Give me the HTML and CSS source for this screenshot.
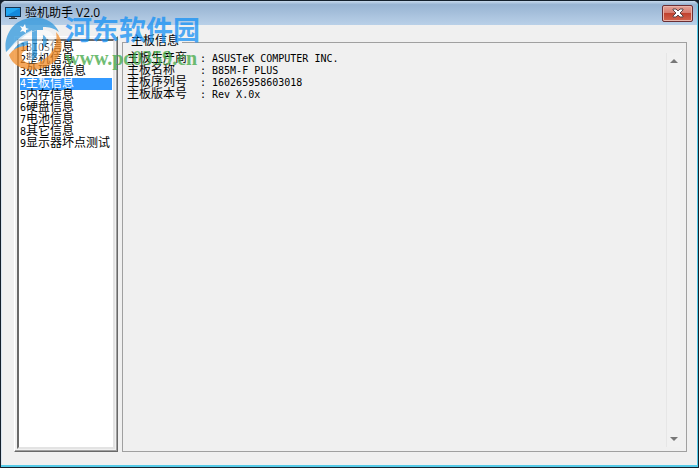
FILE: index.html
```html
<!DOCTYPE html>
<html lang="zh-CN">
<head>
  <meta charset="UTF-8">
  <title>验机助手 V2.0</title>
  <link rel="stylesheet" href="styles.css">
</head>
<body>

  <div class="window">
    <header class="titlebar">
      <svg class="app-icon" viewBox="0 0 16 14" width="16" height="14" aria-hidden="true">
        <rect x="0" y="1" width="16" height="10" fill="#16324f"/>
        <rect x="1" y="2" width="14" height="8" fill="#22a7f2"/>
        <path d="M1 10L15 2V10Z" fill="#1389dc"/>
        <rect x="6" y="11" width="4" height="1" fill="#555"/>
        <rect x="4" y="12" width="8" height="1" fill="#222"/>
      </svg>
      <h1 class="title">验机助手 V2.0</h1>
      <button class="close" type="button" aria-label="关闭">
        <svg viewBox="0 0 12 10" width="12" height="10" aria-hidden="true">
          <path d="M1 1H4L6 3L8 1H11V2L8 5L11 8V9H8L6 7L4 9H1V8L4 5L1 2Z" fill="#fff" stroke="#5c4648" stroke-width="1"/>
        </svg>
      </button>
    </header>

    <main class="content">
      <nav class="menu-frame">
        <ul class="menu">
          <li><a href="#bios"><span class="latin">1BIOS</span>信息</a></li>
          <li><a href="#machine"><span class="latin">2</span>整机信息</a></li>
          <li><a href="#cpu"><span class="latin">3</span>处理器信息</a></li>
          <li><a class="selected" href="#board"><span class="latin">4</span>主板信息</a></li>
          <li><a href="#memory"><span class="latin">5</span>内存信息</a></li>
          <li><a href="#disk"><span class="latin">6</span>硬盘信息</a></li>
          <li><a href="#battery"><span class="latin">7</span>电池信息</a></li>
          <li><a href="#other"><span class="latin">8</span>其它信息</a></li>
          <li><a href="#screen"><span class="latin">9</span>显示器坏点测试</a></li>
        </ul>
      </nav>

      <fieldset class="panel" id="board">
        <legend>主板信息</legend>
        <div class="panel-body">
          <dl class="info">
            <dt>主板生产商</dt><dd class="latin">: ASUSTeK COMPUTER INC.</dd>
            <dt>主板名称</dt><dd class="latin">: B85M-F PLUS</dd>
            <dt>主板序列号</dt><dd class="latin">: 160265958603018</dd>
            <dt>主板版本号</dt><dd class="latin">: Rev X.0x</dd>
          </dl>
          <div class="scrollbar">
            <button class="arrow" type="button" aria-label="向上滚动">
              <svg viewBox="0 0 8 4" width="8" height="4" aria-hidden="true"><path d="M4 0L8 4H0Z" fill="#777"/></svg>
            </button>
            <button class="arrow" type="button" aria-label="向下滚动">
              <svg viewBox="0 0 8 4" width="8" height="4" aria-hidden="true"><path d="M0 0H8L4 4Z" fill="#777"/></svg>
            </button>
          </div>
        </div>
      </fieldset>
    </main>

    <div class="watermark">
      <svg class="logo" viewBox="0 0 60 60" width="60" height="60" aria-hidden="true">
        <path d="M1 40C-2 24 8 8 25 6C39 4 49 10 54 20C49 16 44 15 38 15V18H32L26 20L22 22L10 32Z" fill="#2f97dc"/>
        <path d="M1 41C7 33 14 24 27 18V49L23 51V29C15 30 8 35 3 45Z" fill="#fff" fill-opacity="0.75"/>
        <path d="M23 29C18 29 13 32 9 37L8 45C12 38 17 34 23 33Z" fill="#2f97dc"/>
        <path d="M32 18H38C53 18 54 38 39 42V37C46 33 45 24 37 22V45H32Z" fill="#fff" fill-opacity="0.75"/>
        <path d="M27 20L32 18V44L27 49Z" fill="#2f97dc"/>
        <path d="M38 23C43 25 43 33 38 36Z" fill="#2f97dc"/>
        <path d="M4 43C8 37 14 34 22 34V38C17 39 15 43 18 48C23 53 31 53 38 48C49 41 53 31 51 20C60 29 58 45 45 53C29 62 9 58 4 43Z" fill="#f28c28"/>
        <path d="M15 14L18 15L20 12L21 16L24 17L21 18L21 21L18 19L15 20L17 17Z" fill="#fff"/>
      </svg>
      <div class="watermark-text">
        <span class="site-name">河东软件园</span>
        <span class="site-url">www.pc0359.cn</span>
      </div>
    </div>
  </div>

</body>
</html>
```
FILE: styles.css
```css
* {
  box-sizing: border-box;
}
body {
  margin: 0;
  background: #14202c;
  color: #000;
  font: 12px/12px "Liberation Mono", "Noto Sans CJK SC", monospace;
}
.window {
  position: relative;
  display: flex;
  flex-direction: column;
  height: 100vh;
  border: 1px solid #14202c;
  border-radius: 6px 6px 0 0;
  background: #f0f0f0;
  box-shadow: inset -1px -2px #55cbe8, inset 1px 0 #d8e4ef;
  overflow: hidden;
}
.titlebar {
  display: flex;
  align-items: center;
  gap: 4px;
  height: 24px;
  padding: 0 5px 0 4px;
  background: linear-gradient(#c8daed, #98b4d2 15%, #b9d0e8);
  box-shadow: inset -1px 0 #55cbe8;
}
.title {
  flex: 1;
  margin: 0;
  font: 12px/22px "Open Sans", "Noto Sans CJK SC", sans-serif;
}
.close {
  display: flex;
  align-items: center;
  justify-content: center;
  width: 31px;
  height: 17px;
  padding: 0;
  border: 1px solid #6b2f34;
  border-radius: 2px;
  background: linear-gradient(#e5a397, #d5796c 48%, #c1422f 50%, #d4634c);
  box-shadow: inset 0 0 0 1px #e9b4aa;
}
.content {
  display: flex;
  flex: 1;
  gap: 4px;
  padding: 11px 11px 15px 13px;
}
.menu-frame {
  display: flex;
  width: 104px;
  padding: 2px;
  border: 1px solid;
  border-color: #fff #696969 #696969 #fff;
  box-shadow: inset -1px -1px #a0a0a0;
}
.menu {
  flex: 1;
  margin: 0;
  padding: 1px;
  border: 2px solid;
  border-color: #696969 #e3e3e3 #e3e3e3 #696969;
  background: #fff;
  list-style: none;
}
.menu a {
  display: block;
  height: 12px;
  color: #000;
  text-decoration: none;
  white-space: nowrap;
}
.menu .selected {
  background: #3399ff;
  color: #fff;
}
.latin {
  font-family: "DejaVu Sans Mono", monospace;
  font-size: 10px;
}
.panel {
  display: flex;
  flex: 1;
  min-width: 0;
  margin: 0;
  padding: 5px 6px 4px 4px;
  border: 1px solid #a0a0a0;
}
.panel legend {
  margin-left: 1px;
  padding: 0 3px;
}
.panel-body {
  display: flex;
  flex: 1;
}
.info {
  display: grid;
  flex: 1;
  grid-template-columns: 73px 1fr;
  grid-auto-rows: 12px;
  margin: 0;
}
.info dd {
  margin: 0;
}
.scrollbar {
  display: flex;
  flex-direction: column;
  justify-content: space-between;
  width: 14px;
  border-left: 1px solid #e6e6e6;
  background: #f1f1f1;
}
.arrow {
  display: flex;
  align-items: center;
  justify-content: center;
  height: 16px;
  padding: 0;
  border: 0;
  background: none;
}
.watermark {
  position: absolute;
  top: 11px;
  left: 4px;
  display: flex;
  opacity: 0.75;
  pointer-events: none;
}
.watermark-text {
  display: flex;
  flex-direction: column;
}
.site-name {
  color: #1490f4;
  font: bold 27px/34px "Noto Sans CJK SC", sans-serif;
}
.site-url {
  color: #3fa845;
  font: bold 20px/24px "Liberation Serif", serif;
}
```
